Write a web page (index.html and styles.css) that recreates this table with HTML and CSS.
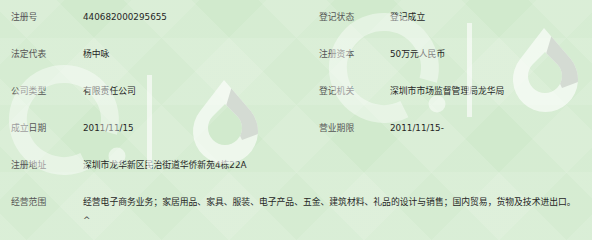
FILE: index.html
```html
<!DOCTYPE html>
<html lang="zh-CN">
<head>
<meta charset="utf-8">
<title>工商信息</title>
<link rel="stylesheet" href="styles.css">
</head>
<body>
<div class="card">
  <div class="info">
    <div class="lbl">注册号</div><div class="val">440682000295655</div>
    <div class="lbl">登记状态</div><div class="val">登记成立</div>

    <div class="lbl">法定代表</div><div class="val">杨中咏</div>
    <div class="lbl">注册资本</div><div class="val">50万元人民币</div>

    <div class="lbl">公司类型</div><div class="val">有限责任公司</div>
    <div class="lbl">登记机关</div><div class="val">深圳市市场监督管理局龙华局</div>

    <div class="lbl">成立日期</div><div class="val">2011/11/15</div>
    <div class="lbl">营业期限</div><div class="val">2011/11/15-</div>

    <div class="lbl">注册地址</div><div class="val wide">深圳市龙华新区民治街道华侨新苑4栋22A</div>

    <div class="lbl">经营范围</div>
    <div class="val wide">经营电子商务业务；家居用品、家具、服装、电子产品、五金、建筑材料、礼品的设计与销售；国内贸易，货物及技术进出口。<div class="toggle">^</div></div>
  </div>
  <svg class="watermark" width="592" height="240" viewBox="0 0 592 240" aria-hidden="true">
    <defs>
      <clipPath id="grayclip">
        <polygon points="546,54 552,34 595,34 595,80 578,82 562,88"/>
      </clipPath>
      <g id="logo">
        <path class="ring" d="M 428.2 80.3 A 46 46 0 1 0 404.4 109.1" />
        <circle class="dot" cx="437" cy="104" r="8.5"/>
        <rect class="bar" x="467" y="23" width="5" height="94"/>
        <path class="drop" fill-rule="evenodd" d="M544 28 L520.2 59 A32.5 32.5 0 1 0 570.8 59 Z M545 52 L533 64 A17 17 0 1 0 557 64 Z"/>
        <path class="drop-gray" clip-path="url(#grayclip)" fill-rule="evenodd" d="M544 28 L520.2 59 A32.5 32.5 0 1 0 570.8 59 Z M545 52 L533 64 A17 17 0 1 0 557 64 Z"/>
      </g>
    </defs>
    <use href="#logo"/>
    <use href="#logo" transform="translate(-320 52)"/>
  </svg>
</div>
</body>
</html>
```

FILE: styles.css
```css
html, body {
  margin: 0;
  padding: 0;
}

body {
  width: 592px;
  height: 240px;
  overflow: hidden;
  font-family: "DejaVu Sans", "Noto Sans CJK SC", sans-serif;
  font-size: 8.8px;
}

.card {
  position: relative;
  width: 592px;
  height: 240px;
  overflow: hidden;
  background-color: #d1eacd;
  background-image:
    repeating-linear-gradient(180deg,
      rgba(255,255,255,0) 0 37.5px,
      rgba(255,255,255,0.10) 37.5px 105px,
      rgba(255,255,255,0) 105px 135px),
    repeating-linear-gradient(45deg,
      rgba(255,255,255,0.12) 0 18.4px,
      rgba(255,255,255,0) 18.4px 66.1px,
      rgba(255,255,255,0.12) 66.1px 95.46px),
    repeating-linear-gradient(-45deg,
      rgba(255,255,255,0.10) 0 17.7px,
      rgba(0,0,0,0) 17.7px 65.4px,
      rgba(255,255,255,0.10) 65.4px 95.46px);
}

.info {
  display: grid;
  grid-template-columns: 72px 236px 71px 1fr;
  padding-left: 11px;
}

.lbl,
.val {
  padding: 11px 0 13px;
  line-height: 13px;
  white-space: nowrap;
}

.lbl {
  color: #555;
}

.val {
  color: #262626;
}

.wide {
  grid-column: 2 / -1;
}

.toggle {
  margin-top: 5px;
  color: #444;
}

.watermark {
  position: absolute;
  left: 0;
  top: 0;
  pointer-events: none;
}

.ring {
  fill: none;
  stroke: rgba(255,255,255,0.42);
  stroke-width: 18;
}

.dot {
  fill: rgba(255,255,255,0.5);
}

.bar {
  fill: rgba(255,255,255,0.6);
}

.drop {
  fill: rgba(255,255,255,0.62);
}

.drop-gray {
  fill: #d4dbd3;
}
```
